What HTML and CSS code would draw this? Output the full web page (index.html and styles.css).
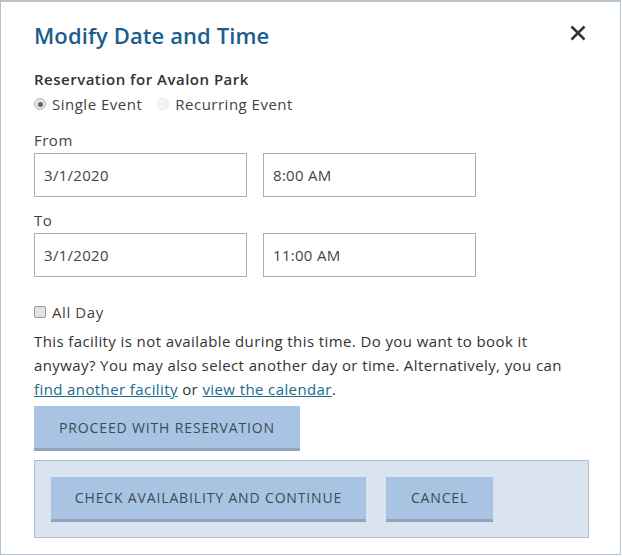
FILE: index.html
```html
<!DOCTYPE html>
<html>
<head>
<meta charset="utf-8">
<link rel="stylesheet" href="styles.css">
</head>
<body>
<div class="modal">
  <div class="header">
    <h1 class="title">Modify Date and Time</h1>
    <button class="close" aria-label="Close">
      <svg width="16" height="16" viewBox="0 0 16 16"><path d="M1.5 1.5L14.5 14.5M14.5 1.5L1.5 14.5" stroke="#333" stroke-width="2.5"/></svg>
    </button>
  </div>
  <div class="subtitle">Reservation for Avalon Park</div>
  <div class="radios">
    <label class="radio-item"><span class="radio checked"></span>Single Event</label>
    <label class="radio-item"><span class="radio disabled"></span>Recurring Event</label>
  </div>
  <div class="field-label from">From</div>
  <div class="row">
    <div class="input">3/1/2020</div>
    <div class="input">8:00 AM</div>
  </div>
  <div class="field-label to">To</div>
  <div class="row">
    <div class="input">3/1/2020</div>
    <div class="input">11:00 AM</div>
  </div>
  <label class="check-item"><span class="checkbox"></span>All Day</label>
  <p class="message">This facility is not available during this time. Do you want to book it anyway? You may also select another day or time. Alternatively, you can <a href="#">find another facility</a> or <a href="#">view the calendar</a>.</p>
  <button class="btn proceed">PROCEED WITH RESERVATION</button>
  <div class="footer">
    <button class="btn check">CHECK AVAILABILITY AND CONTINUE</button>
    <button class="btn cancel">CANCEL</button>
  </div>
</div>
</body>
</html>
```
FILE: styles.css
```css
html, body {
  margin: 0;
  padding: 0;
  background: #ffffff;
}
body {
  font-family: "Open Sans", "Lato", sans-serif;
  color: #333333;
}
.modal {
  box-sizing: border-box;
  width: 621px;
  height: 555px;
  border: 1px solid #b8c2cc;
  border-top-width: 2px;
  padding: 0 32px 0 33px;
  display: flex;
  flex-direction: column;
  align-items: flex-start;
}
.header {
  width: 100%;
  display: flex;
  justify-content: space-between;
  align-items: flex-start;
  margin-top: 18px;
  height: 30px;
}
.title {
  margin: 0;
  font-size: 22px;
  line-height: 30px;
  font-weight: 600;
  color: #1c5d8e;
  letter-spacing: 0.1px;
}
.close {
  border: 0;
  background: none;
  padding: 0;
  margin-top: 5px;
  margin-right: 2px;
  width: 16px;
  height: 16px;
  display: flex;
}
.subtitle {
  margin-top: 19px;
  font-size: 15px;
  font-weight: 600;
  color: #333;
  line-height: 20px;
  letter-spacing: 0.5px;
}
.radios {
  display: flex;
  gap: 15px;
  margin-top: 3px;
  font-size: 15px;
  line-height: 24px;
  color: #444;
  letter-spacing: 0.5px;
}
.radio-item, .check-item {
  display: flex;
  align-items: center;
  gap: 6px;
}
.radio {
  box-sizing: border-box;
  width: 12px;
  height: 12px;
  border-radius: 50%;
  border: 1px solid #b5b5b5;
  background: #e6e6e6;
  display: flex;
  align-items: center;
  justify-content: center;
}
.radio.checked::after {
  content: "";
  width: 5px;
  height: 5px;
  border-radius: 50%;
  background: #666;
}
.radio.disabled {
  border-color: #e8e8e8;
  background: #f5f5f5;
}
.field-label {
  font-size: 15px;
  line-height: 18px;
  color: #444;
  letter-spacing: 0.5px;
}
.field-label.from { margin-top: 15px; }
.field-label.to { margin-top: 14px; }
.row {
  display: flex;
  gap: 16px;
  margin-top: 4px;
}
.input {
  box-sizing: border-box;
  width: 213px;
  height: 44px;
  border: 1px solid #adadad;
  padding-left: 9px;
  display: flex;
  align-items: center;
  font-size: 15px;
  color: #444;
  letter-spacing: 0.3px;
}
.check-item {
  margin-top: 25px;
  font-size: 15px;
  line-height: 20px;
  color: #444;
  letter-spacing: 0.6px;
}
.checkbox {
  box-sizing: border-box;
  width: 12px;
  height: 12px;
  border: 1px solid #9a9a9a;
  border-radius: 2px;
  background: #e3e3e3;
}
.message {
  margin: 7px 0 0;
  font-size: 15px;
  line-height: 24px;
  color: #333;
  width: 554px;
  letter-spacing: 0.4px;
}
.message a {
  color: #1a6b8c;
}
.btn {
  box-sizing: border-box;
  border: 0;
  border-bottom: 3px solid #8fa4bd;
  background: #a8c4e2;
  color: #3c4a5a;
  font-family: inherit;
  font-size: 14px;
  letter-spacing: 0.85px;
  height: 45px;
  padding: 0;
  cursor: pointer;
}
.proceed {
  margin-top: 5px;
  width: 266px;
}
.footer {
  box-sizing: border-box;
  margin-top: 9px;
  width: 555px;
  height: 78px;
  background: #dae4f0;
  border: 1px solid #b4bec9;
  display: flex;
  align-items: center;
  gap: 20px;
  padding-left: 16px;
}
.check { width: 315px; }
.cancel { width: 107px; }
```
